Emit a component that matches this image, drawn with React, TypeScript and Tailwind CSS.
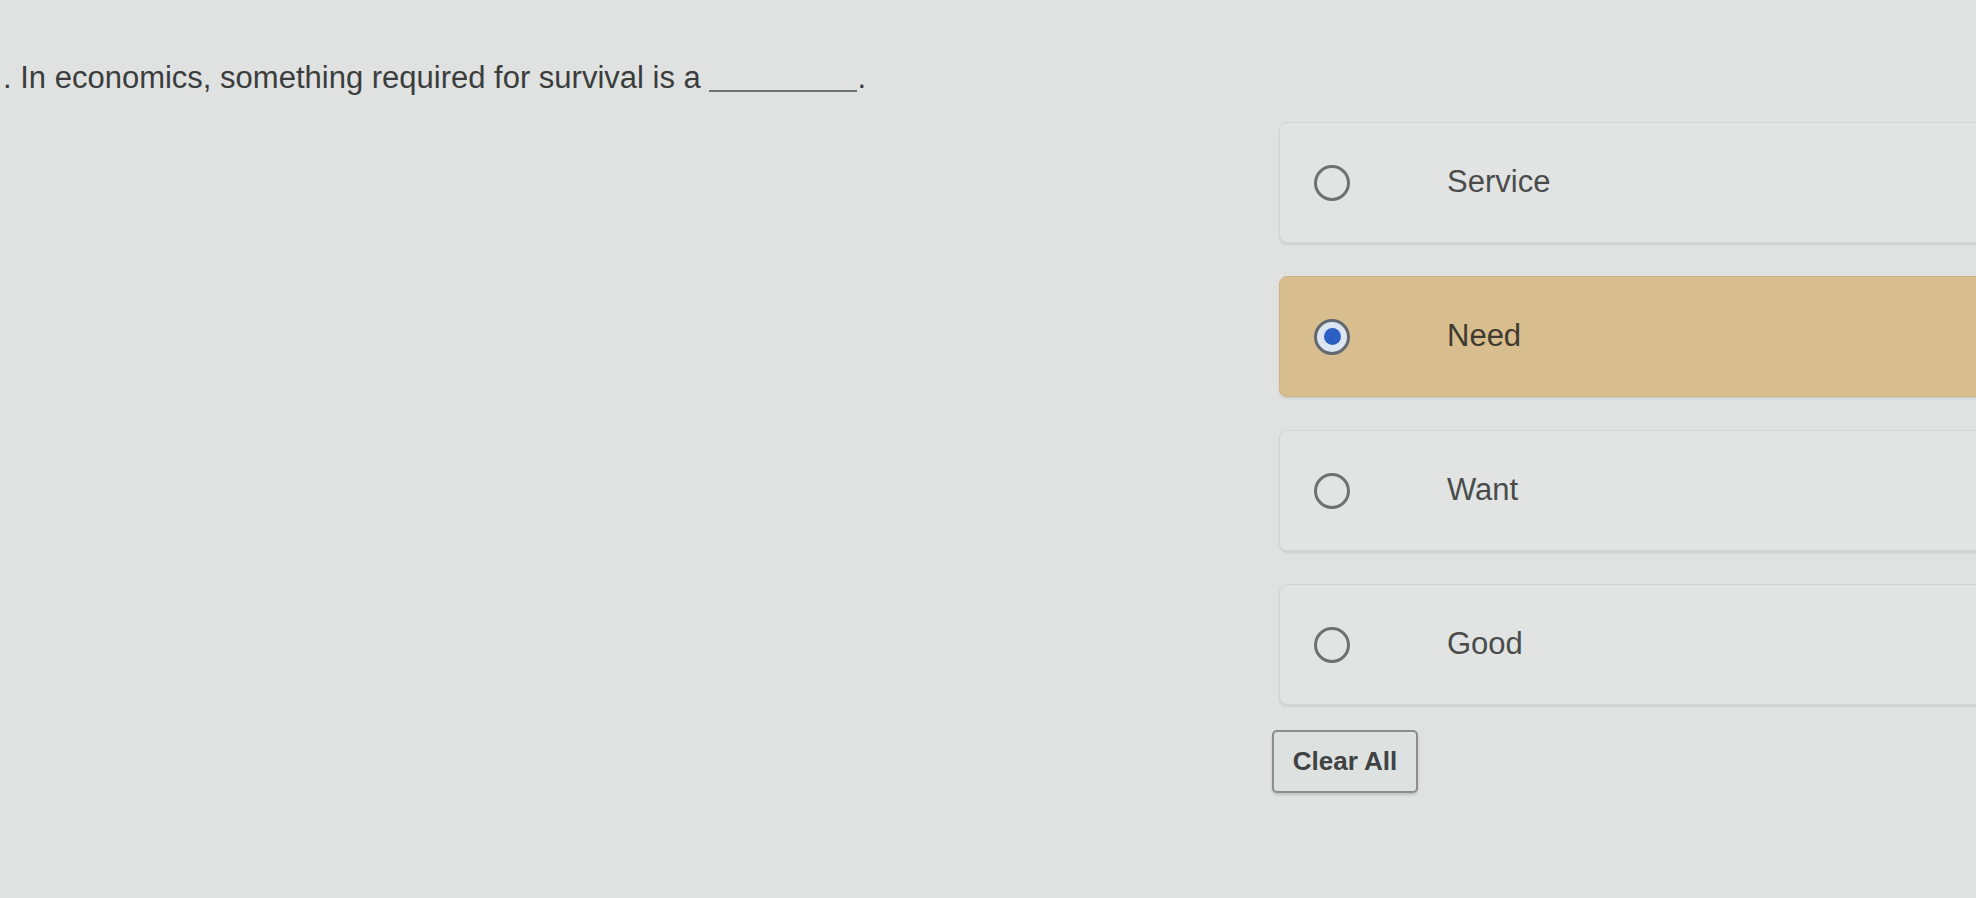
import { useState } from 'react'

const options = ['Service', 'Need', 'Want', 'Good']

function Radio({ checked }: Readonly<{ checked: boolean }>) {
  if (checked) {
    return (
      <span className="flex-none w-[36px] h-[36px] rounded-full border-[3px] border-[#626870] bg-[#dce6f3] flex items-center justify-center">
        <span className="w-[17px] h-[17px] rounded-full bg-[#2c5fc3]" />
      </span>
    )
  }
  return <span className="flex-none w-[36px] h-[36px] rounded-full border-[3px] border-[#6f7170] bg-[#e2e4e3]" />
}

export default function App() {
  const [selected, setSelected] = useState<string | null>('Need')

  return (
    <div className="w-[1976px] h-[898px] overflow-hidden bg-[#dfe2e1] font-['Liberation_Sans',Arial,sans-serif] flex flex-col">
      <p className="pt-[59px] pl-[3px] text-[31px] leading-[37px] text-[#3b3d3d] whitespace-nowrap">
        . In economics, something required for survival is a{' '}
        <span className="inline-block w-[148px] border-b-2 border-[#6f7271] align-baseline translate-y-[4px]" />.
      </p>

      <div className="ml-[1279px] mt-[26px] w-[760px] flex flex-col gap-[33px]">
        {options.map((opt) => {
          const isOn = selected === opt
          return (
            <button
              key={opt}
              type="button"
              onClick={() => setSelected(opt)}
              className={`h-[121px] flex items-center pl-[34px] rounded-l-[8px] border text-left shadow-[0_2px_2px_rgba(0,0,0,0.08)] ${
                isOn ? 'bg-[#d8bd8f] border-[#cfb384]' : 'bg-[#e1e4e3] border-[#d2d5d4]'
              }`}
            >
              <Radio checked={isOn} />
              <span className={`ml-[97px] text-[31px] ${isOn ? 'text-[#3f3a30]' : 'text-[#4a4c4c]'}`}>{opt}</span>
            </button>
          )
        })}
      </div>

      <div className="ml-[1272px] mt-[25px]">
        <button
          type="button"
          onClick={() => setSelected(null)}
          className="w-[146px] h-[63px] rounded-[5px] border-2 border-[#8b8e8d] bg-[#dde1e0] shadow-[0_2px_3px_rgba(0,0,0,0.15)] text-[26px] font-bold text-[#404343]"
        >
          Clear All
        </button>
      </div>
    </div>
  )
}
